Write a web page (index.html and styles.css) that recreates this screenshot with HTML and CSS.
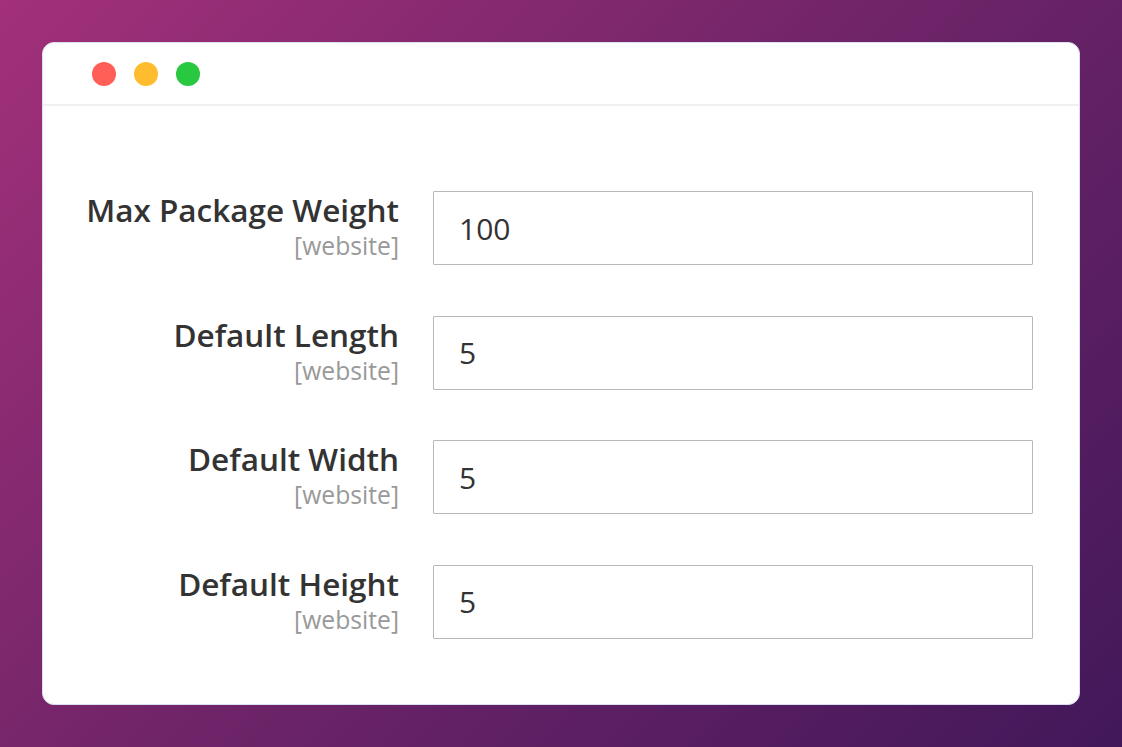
FILE: index.html
```html
<!DOCTYPE html>
<html>
<head>
    <title>Shipping Settings</title>
    <link rel="stylesheet" href="styles.css">
</head>
<body>

<div class="window">
    <div class="titlebar">
        <span class="dot red"></span>
        <span class="dot yellow"></span>
        <span class="dot green"></span>
    </div>

    <div class="form">
        <div class="label">
            <span class="name">Max Package Weight</span>
            <span class="scope">[website]</span>
        </div>
        <div class="field"><input type="text" value="100"></div>

        <div class="label">
            <span class="name">Default Length</span>
            <span class="scope">[website]</span>
        </div>
        <div class="field"><input type="text" value="5"></div>

        <div class="label">
            <span class="name">Default Width</span>
            <span class="scope">[website]</span>
        </div>
        <div class="field"><input type="text" value="5"></div>

        <div class="label">
            <span class="name">Default Height</span>
            <span class="scope">[website]</span>
        </div>
        <div class="field"><input type="text" value="5"></div>
    </div>
</div>

</body>
</html>
```

FILE: styles.css
```css
html, body {
    height: 100%;
}

body {
    margin: 0;
    padding: 42px;
    box-sizing: border-box;
    background: linear-gradient(135deg, #a2307a 0%, #6e2468 50%, #42185a 100%);
    font-family: "Open Sans", "Noto Sans", sans-serif;
}

.window {
    width: 1038px;
    height: 663px;
    box-sizing: border-box;
    background-color: #fff;
    border: 1px solid #dcdff0;
    border-radius: 12px;
    overflow: hidden;
}

/* Traffic light buttons */
.titlebar {
    height: 61px;
    display: flex;
    align-items: center;
    gap: 18px;
    padding-left: 49px;
    border-bottom: 2px solid #f0f0f2;
}

.dot {
    width: 24px;
    height: 24px;
    border-radius: 50%;
}

.dot.red { background-color: #ff5f57; }
.dot.yellow { background-color: #febc2e; }
.dot.green { background-color: #28c840; }

.form {
    display: grid;
    grid-template-columns: 356px 600px;
    column-gap: 34px;
    row-gap: 50.5px;
    padding-top: 85px;
}

.label {
    display: flex;
    flex-direction: column;
    align-items: flex-end;
    padding-top: 1px;
}

.label .name {
    font-size: 31.5px;
    font-weight: 600;
    line-height: 36px;
    color: #333;
    white-space: nowrap;
}

.label .scope {
    margin-top: 4px;
    font-size: 24.7px;
    line-height: 28px;
    color: #999;
}

.field input {
    display: block;
    width: 600px;
    height: 74px;
    box-sizing: border-box;
    margin: 0;
    padding: 0 25px;
    border: 1px solid #b8b8b8;
    border-radius: 1px;
    font-family: "Open Sans", "Noto Sans", sans-serif;
    font-size: 30px;
    color: #333;
    outline: none;
}
```
